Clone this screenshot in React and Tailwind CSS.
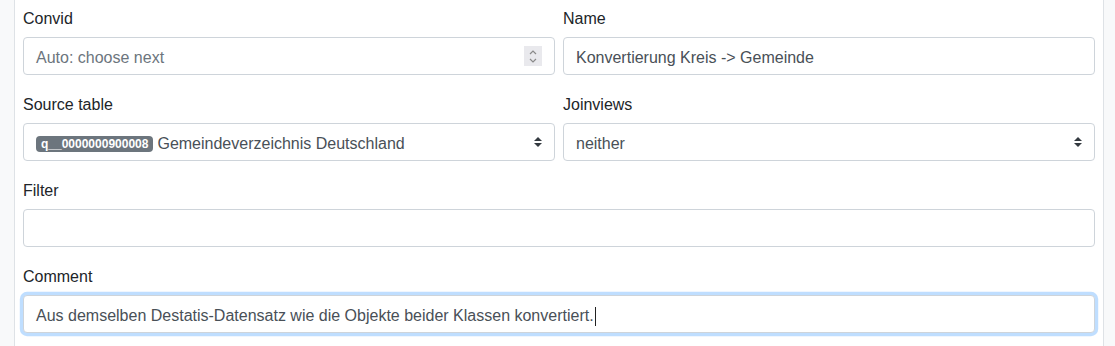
const font = { fontFamily: '"Segoe UI", "Liberation Sans", Arial, sans-serif' };

const Label = ({ children }) => (
  <div className="mb-[6px] pt-[2px] text-base leading-6 text-[#212529]">{children}</div>
);

const Field = ({ children, className = '' }) => (
  <div
    className={`relative flex h-[38px] items-center rounded border border-[#ced4da] bg-white px-3 pt-[4px] text-base leading-6 text-[#495057] ${className}`}
  >
    {children}
  </div>
);

const SelectArrow = () => (
  <svg className="absolute right-3 top-1/2 -translate-y-1/2" width="8" height="10" viewBox="0 0 4 5">
    <path d="M2 0L0 2h4zm0 5L0 3h4z" fill="#343a40" />
  </svg>
);

const Spinner = () => (
  <div className="absolute right-3 top-1/2 flex h-5 w-[18px] -translate-y-1/2 flex-col items-center justify-center gap-[3px] bg-[#e9e9ed]">
    <svg width="8" height="5" viewBox="0 0 8 5">
      <path d="M1 4L4 1l3 3" fill="none" stroke="#8a8a8a" strokeWidth="1.2" />
    </svg>
    <svg width="8" height="5" viewBox="0 0 8 5">
      <path d="M1 1l3 3 3-3" fill="none" stroke="#8a8a8a" strokeWidth="1.2" />
    </svg>
  </div>
);

export default function App() {
  return (
    <div className="h-[346px] overflow-hidden bg-[#f8f9fa]" style={font}>
      <div className="ml-[14px] mr-[11px] h-full border-x border-[#dee2e6] bg-white px-2 pt-[5px]">
        <div className="grid grid-cols-2 gap-x-2">
          <div className="mb-4">
            <Label>Convid</Label>
            <Field>
              <span className="text-[#6c757d]">Auto: choose next</span>
              <Spinner />
            </Field>
          </div>
          <div className="mb-4">
            <Label>Name</Label>
            <Field>Konvertierung Kreis -&gt; Gemeinde</Field>
          </div>
          <div className="mb-4">
            <Label>Source table</Label>
            <Field>
              <span className="mr-1 rounded bg-[#6c757d] px-[5px] py-[2px] text-xs font-bold leading-3 text-white">
                q__0000000900008
              </span>
              <span>Gemeindeverzeichnis Deutschland</span>
              <SelectArrow />
            </Field>
          </div>
          <div className="mb-4">
            <Label>Joinviews</Label>
            <Field>
              neither
              <SelectArrow />
            </Field>
          </div>
        </div>
        <div className="mb-4">
          <Label>Filter</Label>
          <Field />
        </div>
        <div className="mb-4">
          <Label>Comment</Label>
          <Field className="border-[#80bdff] shadow-[0_0_0_3.2px_rgba(0,123,255,0.25)]">
            <span>Aus demselben Destatis-Datensatz wie die Objekte beider Klassen konvertiert.</span>
            <span className="ml-px h-[19px] w-px bg-[#222]" />
          </Field>
        </div>
      </div>
    </div>
  );
}
